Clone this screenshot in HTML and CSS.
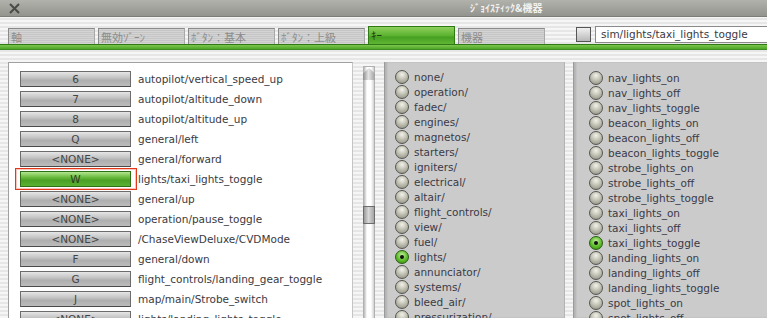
FILE: index.html
```html
<!DOCTYPE html>
<html lang="ja">
<head>
    <meta charset="UTF-8">
    <title>ｼﾞｮｲｽﾃｨｯｸ&amp;機器</title>
    <link rel="stylesheet" href="styles.css">
</head>
<body>
    <div class="titlebar">
        <svg class="close" width="11" height="11" viewBox="0 0 11 11">
            <path d="M1 1 L10 10 M10 1 L1 10" stroke="#4a4a48" stroke-width="2" fill="none"/>
        </svg>
        <span class="title">ｼﾞｮｲｽﾃｨｯｸ&amp;機器</span>
    </div>
    <div class="toolbar">
        <div class="tabs">
            <div class="tab">軸</div>
            <div class="tab">無効ｿﾞｰﾝ</div>
            <div class="tab">ﾎﾞﾀﾝ：基本</div>
            <div class="tab">ﾎﾞﾀﾝ：上級</div>
            <div class="tab active">ｷｰ</div>
            <div class="tab">機器</div>
            <div class="checkbox"></div>
            <div class="command">sim/lights/taxi_lights_toggle</div>
        </div>
        <div class="greenbar"></div>
    </div>
    <div class="content">
        <div class="key-list">
            <div class="row"><span class="key">6</span><span class="cmd">autopilot/vertical_speed_up</span></div>
            <div class="row"><span class="key">7</span><span class="cmd">autopilot/altitude_down</span></div>
            <div class="row"><span class="key">8</span><span class="cmd">autopilot/altitude_up</span></div>
            <div class="row"><span class="key">Q</span><span class="cmd">general/left</span></div>
            <div class="row"><span class="key">&lt;NONE&gt;</span><span class="cmd">general/forward</span></div>
            <div class="row"><span class="key selected">W</span><span class="cmd">lights/taxi_lights_toggle</span></div>
            <div class="row"><span class="key">&lt;NONE&gt;</span><span class="cmd">general/up</span></div>
            <div class="row"><span class="key">&lt;NONE&gt;</span><span class="cmd">operation/pause_toggle</span></div>
            <div class="row"><span class="key">&lt;NONE&gt;</span><span class="cmd">/ChaseViewDeluxe/CVDMode</span></div>
            <div class="row"><span class="key">F</span><span class="cmd">general/down</span></div>
            <div class="row"><span class="key">G</span><span class="cmd">flight_controls/landing_gear_toggle</span></div>
            <div class="row"><span class="key">J</span><span class="cmd">map/main/Strobe_switch</span></div>
            <div class="row"><span class="key">&lt;NONE&gt;</span><span class="cmd">lights/landing_lights_toggle</span></div>
        </div>
        <div class="scrollbar">
            <div class="track">
                <div class="arrow"></div>
                <div class="thumb"></div>
            </div>
        </div>
        <div class="panel groups">
            <div class="opt"><span class="radio"></span>none/</div>
            <div class="opt"><span class="radio"></span>operation/</div>
            <div class="opt"><span class="radio"></span>fadec/</div>
            <div class="opt"><span class="radio"></span>engines/</div>
            <div class="opt"><span class="radio"></span>magnetos/</div>
            <div class="opt"><span class="radio"></span>starters/</div>
            <div class="opt"><span class="radio"></span>igniters/</div>
            <div class="opt"><span class="radio"></span>electrical/</div>
            <div class="opt"><span class="radio"></span>altair/</div>
            <div class="opt"><span class="radio"></span>flight_controls/</div>
            <div class="opt"><span class="radio"></span>view/</div>
            <div class="opt"><span class="radio"></span>fuel/</div>
            <div class="opt"><span class="radio on"></span>lights/</div>
            <div class="opt"><span class="radio"></span>annunciator/</div>
            <div class="opt"><span class="radio"></span>systems/</div>
            <div class="opt"><span class="radio"></span>bleed_air/</div>
            <div class="opt"><span class="radio"></span>pressurization/</div>
        </div>
        <div class="panel commands">
            <div class="opt"><span class="radio"></span>nav_lights_on</div>
            <div class="opt"><span class="radio"></span>nav_lights_off</div>
            <div class="opt"><span class="radio"></span>nav_lights_toggle</div>
            <div class="opt"><span class="radio"></span>beacon_lights_on</div>
            <div class="opt"><span class="radio"></span>beacon_lights_off</div>
            <div class="opt"><span class="radio"></span>beacon_lights_toggle</div>
            <div class="opt"><span class="radio"></span>strobe_lights_on</div>
            <div class="opt"><span class="radio"></span>strobe_lights_off</div>
            <div class="opt"><span class="radio"></span>strobe_lights_toggle</div>
            <div class="opt"><span class="radio"></span>taxi_lights_on</div>
            <div class="opt"><span class="radio"></span>taxi_lights_off</div>
            <div class="opt"><span class="radio on"></span>taxi_lights_toggle</div>
            <div class="opt"><span class="radio"></span>landing_lights_on</div>
            <div class="opt"><span class="radio"></span>landing_lights_off</div>
            <div class="opt"><span class="radio"></span>landing_lights_toggle</div>
            <div class="opt"><span class="radio"></span>spot_lights_on</div>
            <div class="opt"><span class="radio"></span>spot_lights_off</div>
        </div>
    </div>
</body>
</html>
```

FILE: styles.css
```css
body {
    margin: 0;
    width: 767px;
    height: 318px;
    overflow: hidden;
    font-family: "DejaVu Sans", "Noto Sans CJK JP", sans-serif;
    font-size: 10.5px;
    color: #3a3a42;
    background: repeating-linear-gradient(#f6f6f6 0, #f6f6f6 2px, #e6e6e6 2px, #e6e6e6 4px);
}
.titlebar {
    height: 16px;
    display: flex;
    align-items: center;
    background: linear-gradient(#b2b2ac, #94948e);
    border-bottom: 1px solid #7c7c78;
}
.close {
    margin-left: 9px;
}
.title {
    margin-left: 450px;
    font-family: "Noto Sans CJK JP", sans-serif;
    font-size: 10px;
    font-weight: bold;
    color: #f2f2ee;
    line-height: 16px;
}
/* tabs */
.toolbar {
    margin-top: 9px;
}
.tabs {
    display: flex;
    align-items: flex-end;
    height: 18px;
    padding-left: 8px;
}
.tab {
    width: 83px;
    height: 15px;
    margin-right: 3px;
    padding-left: 2px;
    border: 1px solid #8a8a8a;
    border-bottom: none;
    border-right-color: #a8a8a8;
    background: repeating-linear-gradient(#d4d4d4 0, #d4d4d4 1px, #c6c6c6 1px, #c6c6c6 2px);
    font-family: "Noto Sans CJK JP", sans-serif;
    font-size: 11px;
    line-height: 16px;
    color: #8c8c8c;
    overflow: hidden;
    white-space: nowrap;
}
.tab.active {
    height: 17px;
    border-color: #2f7a14;
    background: linear-gradient(#8ed05e, #5cb330 50%, #48a022 60%, #5fb634);
    color: #1e3a10;
}
.checkbox {
    width: 13px;
    height: 13px;
    margin-left: 28px;
    margin-bottom: 2px;
    border: 1px solid #555;
    background: linear-gradient(#f0f0f0, #b8b8b8);
}
.command {
    flex-grow: 1;
    height: 15px;
    margin-left: 4px;
    margin-bottom: 1px;
    padding-left: 5px;
    background: #fff;
    border: 1px solid #8a8a8a;
    border-right: none;
    font-size: 10.5px;
    line-height: 15px;
    color: #3a3a42;
}
.greenbar {
    height: 4px;
    border-top: 1px solid #2f7a14;
    border-bottom: 1px solid #3f8c22;
    background: linear-gradient(#7cc650, #4ea626);
}
/* main area */
.content {
    display: flex;
    margin-top: 12px;
    height: 256px;
}
.key-list {
    width: 332px;
    margin-left: 8px;
    padding: 6px 0 0 11px;
    background: #fff;
    border: 1px solid #a0a0a0;
    border-right-color: #c4c4c4;
    border-bottom: none;
}
.row {
    display: flex;
    align-items: center;
    height: 20px;
}
.key {
    position: relative;
    width: 109px;
    height: 14px;
    margin-right: 7px;
    border: 1px solid #6c6c6c;
    border-bottom-color: #4a4a4a;
    background: linear-gradient(#e6e6e6, #c4c4c4 40%, #aeaeae 60%, #bcbcbc);
    text-align: center;
    line-height: 14px;
    color: #454545;
}
.key.selected {
    border-color: #2e6e14;
    background: linear-gradient(#b4e690, #66b83a 40%, #4aa024 60%, #5ab232);
    color: #2c3a24;
}
.key.selected::after {
    content: "";
    position: absolute;
    top: -4px;
    bottom: -4px;
    left: -6px;
    right: -7px;
    border: 1px solid #e2391b;
    box-shadow: inset 0 0 0 1px rgba(236, 110, 80, 0.4);
}
.cmd {
    white-space: nowrap;
}
.scrollbar {
    width: 31px;
    padding: 4px 0 0 10px;
    box-sizing: border-box;
}
.track {
    width: 10px;
    height: 100%;
    position: relative;
    background: linear-gradient(90deg, #b8b8b8, #fff 30%, #fff 70%, #d0d0d0);
    border: 1px solid #b0b0b0;
    border-bottom: none;
}
.arrow {
    position: absolute;
    top: 1px;
    left: -1px;
    width: 12px;
    height: 12px;
    background: linear-gradient(90deg, #8c8c8c, #e4e4e4 45%, #a0a0a0);
    clip-path: polygon(50% 0, 100% 45%, 100% 100%, 0 100%, 0 45%);
}
.thumb {
    position: absolute;
    top: 139px;
    left: -1px;
    width: 10px;
    height: 16px;
    border: 1px solid #6c6c6c;
    background: linear-gradient(90deg, #9a9a9a, #d8d8d8 45%, #a4a4a4);
}
.panel {
    background: #cbcbcb;
    border-left: 1px solid #9a9a9a;
    box-shadow: inset 2px 0 2px rgba(0, 0, 0, 0.12);
    color: #3a3a48;
}
.groups {
    width: 169px;
    padding: 7px 0 0 10px;
    border-right: 1px solid #b4b4b4;
}
.commands {
    flex-grow: 1;
    margin-left: 8px;
    padding: 8px 0 0 15px;
}
.opt {
    display: flex;
    align-items: center;
    height: 15px;
    white-space: nowrap;
}
.radio {
    position: relative;
    width: 12px;
    height: 12px;
    margin-right: 5px;
    border: 1px solid #555550;
    border-radius: 50%;
    background: radial-gradient(circle at 50% 30%, #f2f2ea 0, #b8b8aa 55%, #8a8a80 100%);
}
.radio.on {
    border-color: #2a5a12;
    background: radial-gradient(circle at 50% 35%, #c4f0a0 0, #5cbc28 55%, #2e8810 100%);
}
.radio.on::after {
    content: "";
    position: absolute;
    top: 4px;
    left: 4px;
    width: 4px;
    height: 4px;
    border-radius: 50%;
    background: #111;
}
```
